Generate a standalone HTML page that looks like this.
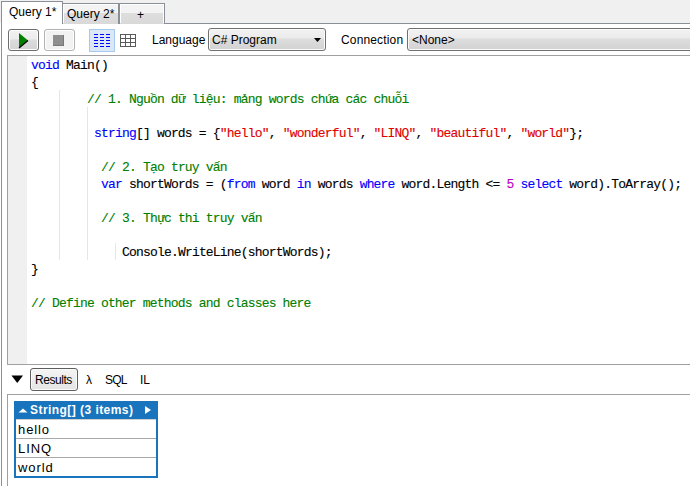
<!DOCTYPE html>
<html><head><meta charset="utf-8">
<style>
*{margin:0;padding:0;box-sizing:border-box}
html,body{width:690px;height:486px;overflow:hidden;background:#fff}
body{position:relative;font-family:"Liberation Sans",sans-serif;font-size:12px;color:#000}
.a{position:absolute}
.t{position:absolute;line-height:14px;white-space:pre}
.code{position:absolute;font-family:"Liberation Mono",monospace;font-size:13px;letter-spacing:-0.812px;line-height:17px;white-space:pre;color:#000;-webkit-text-stroke:0.12px currentColor}
.k{color:#0000ff}
.c{color:#008000}
.s{color:#e00000}
.n{color:#c000c0}
.g{position:absolute;width:1px;background:#e6e6e6}
</style></head><body>
<!-- tab strip -->
<div class="a" style="left:0;top:0;width:690px;height:23px;background:#f0f0f0"></div>
<div class="a" style="left:62px;top:23px;width:628px;height:1px;background:#8b8f97"></div>
<!-- active tab -->
<div class="a" style="left:1px;top:1px;width:62px;height:23px;background:#fff;border:1px solid #8b8f97;border-bottom:none"></div>
<div class="a" style="left:1px;top:23px;width:1px;height:463px;background:#8b8f97"></div>
<div class="t" style="left:9px;top:5px">Query 1*</div>
<!-- tab 2 -->
<div class="a" style="left:63px;top:3px;width:56px;height:21px;border-top:1px solid #8b8f97;border-right:1px solid #8b8f97;background:linear-gradient(#f3f3f3 0,#f3f3f3 9px,#dedede 9px,#d9d9d9 100%)"></div>
<div class="a" style="left:63px;top:4px;width:1px;height:19px;background:#fff"></div>
<div class="a" style="left:63px;top:4px;width:55px;height:1px;background:#fff"></div>
<div class="t" style="left:67px;top:7px">Query 2*</div>
<!-- plus tab -->
<div class="a" style="left:119px;top:3px;width:46px;height:21px;border:1px solid #8b8f97;border-bottom:none;background:linear-gradient(#f3f3f3 0,#f3f3f3 9px,#dedede 9px,#d9d9d9 100%)"></div>
<div class="a" style="left:120px;top:4px;width:44px;height:19px;border:1px solid #fff;border-bottom:none"></div>
<div class="t" style="left:137px;top:8px">+</div>

<!-- toolbar -->
<div class="a" style="left:8px;top:29px;width:31px;height:22px;border:1px solid #6d6d6d;border-radius:3px;background:linear-gradient(#f2f2f2 0,#ececec 9px,#dcdcdc 10px,#d3d3d3 100%);box-shadow:inset 0 0 0 1px #fff"></div>
<svg class="a" style="left:18px;top:32px" width="11" height="17" viewBox="0 0 11 17"><polygon points="1,1 10,8.5 1,16" fill="#008000"/><polyline points="1,16 10,8.5" stroke="#000" stroke-width="1.2" fill="none"/></svg>
<div class="a" style="left:44px;top:29px;width:31px;height:22px;border:1px solid #b0b3b6;border-radius:3px;background:#f2f2f2;box-shadow:inset 0 0 0 1px #fff"></div>
<div class="a" style="left:53px;top:35px;width:11px;height:11px;background:#8f8f8f;border-right:1px solid #777;border-bottom:1px solid #777"></div>

<div class="a" style="left:89px;top:29px;width:26px;height:23px;border:1px solid #a6c9ee;background:#dce7f5"></div>
<svg class="a" style="left:93px;top:33px" width="19" height="15" viewBox="0 0 19 15">
<g fill="#0000ff">
<rect x="1" y="1" width="4" height="1"/><rect x="7" y="1" width="4" height="1"/><rect x="13" y="1" width="4" height="1"/>
<rect x="1" y="4" width="4" height="1"/><rect x="7" y="4" width="4" height="1"/><rect x="13" y="4" width="4" height="1"/>
<rect x="1" y="7" width="4" height="1"/><rect x="7" y="7" width="4" height="1"/><rect x="13" y="7" width="4" height="1"/>
<rect x="1" y="10" width="4" height="1"/><rect x="7" y="10" width="4" height="1"/><rect x="13" y="10" width="4" height="1"/>
<rect x="1" y="13" width="4" height="1"/><rect x="7" y="13" width="4" height="1"/><rect x="13" y="13" width="4" height="1"/>
</g></svg>
<svg class="a" style="left:120px;top:34px" width="16" height="13" viewBox="0 0 16 13">
<g fill="#5a5a5a">
<rect x="0" y="0" width="16" height="1"/><rect x="0" y="4" width="16" height="1"/><rect x="0" y="8" width="16" height="1"/><rect x="0" y="12" width="16" height="1"/>
<rect x="0" y="0" width="1" height="13"/><rect x="5" y="0" width="1" height="13"/><rect x="10" y="0" width="1" height="13"/><rect x="15" y="0" width="1" height="13"/>
</g></svg>

<div class="t" style="left:152px;top:33px">Language</div>
<div class="a" style="left:208px;top:28px;width:118px;height:23px;border:1px solid #707070;border-radius:3px;background:linear-gradient(#f2f2f2 0,#ebebeb 9px,#dddddd 10px,#d2d2d2 100%);box-shadow:inset 0 0 0 1px #fbfbfb"></div>
<div class="t" style="left:212px;top:33px">C# Program</div>
<svg class="a" style="left:313px;top:37px" width="9" height="6" viewBox="0 0 9 6"><polygon points="1,1 8,1 4.5,5" fill="#000"/></svg>

<div class="t" style="left:341px;top:33px;letter-spacing:0.15px">Connection</div>
<div class="a" style="left:407px;top:28px;width:290px;height:23px;border:1px solid #707070;border-radius:3px;background:linear-gradient(#f2f2f2 0,#ebebeb 9px,#dddddd 10px,#d2d2d2 100%);box-shadow:inset 0 0 0 1px #fbfbfb"></div>
<div class="t" style="left:412px;top:33px">&lt;None&gt;</div>

<!-- editor -->
<div class="a" style="left:7px;top:55px;width:690px;height:310px;border:1px solid #a0a0a0"></div>
<div class="a" style="left:8px;top:56px;width:19px;height:308px;background:#f0f0f0"></div>
<div class="g" style="left:59px;top:90px;height:170px"></div>
<div class="g" style="left:87px;top:107px;height:153px"></div>
<div class="g" style="left:115px;top:243px;height:17px"></div>

<div class="code" style="left:31px;top:57px"><span class="k">void</span> Main()</div>
<div class="code" style="left:31px;top:74px">{</div>
<div class="code" style="left:87px;top:91px"><span class="c">// 1. Nguồn dữ liệu: mảng words chứa các chuỗi</span></div>
<div class="code" style="left:94px;top:125px"><span class="k">string</span>[] words = {<span class="s">"hello"</span>, <span class="s">"wonderful"</span>, <span class="s">"LINQ"</span>, <span class="s">"beautiful"</span>, <span class="s">"world"</span>};</div>
<div class="code" style="left:101px;top:159px"><span class="c">// 2. Tạo truy vấn</span></div>
<div class="code" style="left:101px;top:176px"><span class="k">var</span> shortWords = (<span class="k">from</span> word <span class="k">in</span> words <span class="k">where</span> word.Length &lt;= <span class="n">5</span> <span class="k">select</span> word).ToArray();</div>
<div class="code" style="left:101px;top:210px"><span class="c">// 3. Thực thi truy vấn</span></div>
<div class="code" style="left:122px;top:244px">Console.WriteLine(shortWords);</div>
<div class="code" style="left:31px;top:261px">}</div>
<div class="code" style="left:31px;top:295px"><span class="c">// Define other methods and classes here</span></div>

<!-- results bar -->
<svg class="a" style="left:11px;top:375px" width="13" height="9" viewBox="0 0 13 9"><polygon points="0.5,0.5 12,0.5 6.25,8" fill="#000"/></svg>
<div class="a" style="left:30px;top:368px;width:48px;height:23px;border:1px solid #5e5e5e;border-radius:3px;background:linear-gradient(#f4f4f4,#e4e4e4);box-shadow:inset 0 0 0 1px #fafafa"></div>
<div class="t" style="left:35px;top:373px;letter-spacing:-0.45px">Results</div>
<div class="t" style="left:86px;top:373px">λ</div>
<div class="t" style="left:105px;top:373px;letter-spacing:-0.8px">SQL</div>
<div class="t" style="left:140px;top:373px">IL</div>

<!-- results panel -->
<div class="a" style="left:7px;top:394px;width:690px;height:100px;border:1px solid #a0a0a0"></div>
<div class="a" style="left:14px;top:401px;width:144px;height:77px;border:2px solid #1774bd;border-top:none;background:#fff"></div>
<div class="a" style="left:14px;top:401px;width:144px;height:18px;background:#1774bd"></div>
<div class="a" style="left:16px;top:419px;width:140px;height:1px;background:#d0d0d0"></div>
<svg class="a" style="left:18px;top:408px" width="10" height="5" viewBox="0 0 10 5"><polygon points="0.5,4.5 9.5,4.5 5,0.5" fill="#fff"/></svg>
<div class="t" style="left:30px;top:403px;font-weight:bold;color:#fff;letter-spacing:0.45px">String[] (3 items)</div>
<svg class="a" style="left:145px;top:406px" width="6" height="8" viewBox="0 0 6 8"><polygon points="0,0 6,4 0,8" fill="#fff"/></svg>
<div class="a" style="left:16px;top:438px;width:140px;height:1px;background:#a8a8a8"></div>
<div class="a" style="left:16px;top:457px;width:140px;height:1px;background:#a8a8a8"></div>
<div class="t" style="left:18px;top:422px;font-size:13px;line-height:16px;letter-spacing:0.9px">hello</div>
<div class="t" style="left:18px;top:441px;font-size:13px;line-height:16px;letter-spacing:0.9px">LINQ</div>
<div class="t" style="left:18px;top:460px;font-size:13px;line-height:16px;letter-spacing:0.9px">world</div>
</body></html>
